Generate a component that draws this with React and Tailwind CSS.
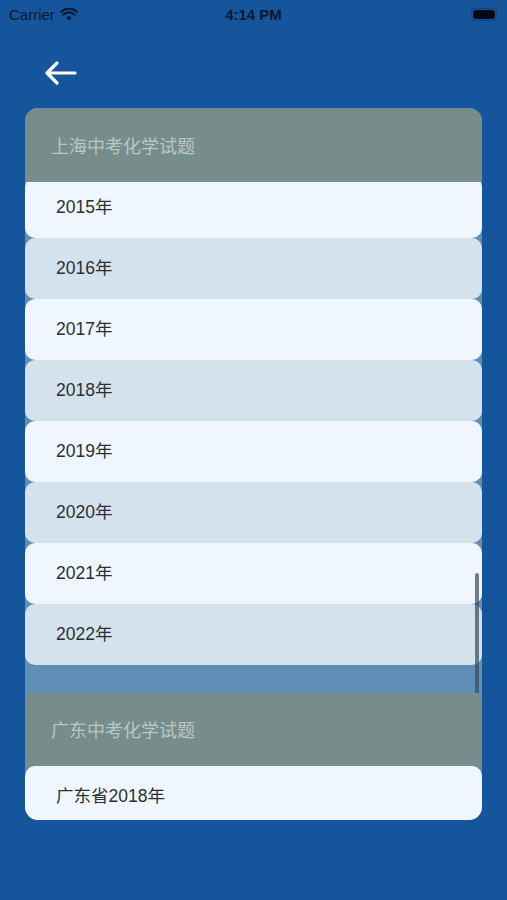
import React from "react";

const years = ["2015年", "2016年", "2017年", "2018年", "2019年", "2020年", "2021年", "2022年"];

function StatusBar() {
  return (
    <div className="relative h-[28px] flex items-center px-[9px] text-[#0b1830]">
      <div className="flex items-center gap-[5px]">
        <span className="text-[15px] font-medium leading-none">Carrier</span>
        <svg width="18" height="13" viewBox="0 0 18 13">
          <path d="M9 12.5 L6.3 9.4 A4 4 0 0 1 11.7 9.4 Z" fill="#0b1830" />
          <path d="M3.6 6.6 A7.6 7.6 0 0 1 14.4 6.6" stroke="#0b1830" strokeWidth="2.2" fill="none" strokeLinecap="round" />
          <path d="M1.2 3.8 A11 11 0 0 1 16.8 3.8" stroke="#0b1830" strokeWidth="2.2" fill="none" strokeLinecap="round" />
        </svg>
      </div>
      <span className="absolute left-1/2 -translate-x-1/2 text-[15px] font-semibold leading-none">4:14 PM</span>
      <div className="ml-auto mr-[1px] w-[26px] h-[13px] rounded-[4px] border border-[#0b1830]/30 p-[1px]">
        <div className="w-full h-full rounded-[3px] bg-[#050a14]" />
      </div>
    </div>
  );
}

function Row({ label, light }) {
  return (
    <div
      className={`h-[61px] shrink-0 rounded-[10px] flex items-center pl-[31px] text-[17.5px] text-[#2b2f33] ${
        light ? "bg-[#f0f6fe]" : "bg-[#d4e2ed]"
      }`}
    >
      {label}
    </div>
  );
}

function SectionHeader({ title, h }) {
  return (
    <div className={`${h} shrink-0 relative z-10 bg-[#778d8b] flex items-center pl-[26px] pt-[4px] text-[18px] text-[#b9c7c5]`}>
      {title}
    </div>
  );
}

export default function App() {
  return (
    <div
      className="w-[507px] h-[900px] bg-[#15559b] overflow-hidden"
      style={{ fontFamily: '"Liberation Sans", "Noto Sans CJK SC", sans-serif' }}
    >
      <StatusBar />
      <div className="h-[80px] flex items-center pl-[44px]">
        <svg width="33" height="26" viewBox="0 0 33 26" className="mt-[10px]">
          <path d="M31 13 H4 M13 3 L3 13 L13 23" stroke="white" strokeWidth="3.2" fill="none" strokeLinecap="round" strokeLinejoin="round" />
        </svg>
      </div>
      <div className="mx-[25px] h-[712px] rounded-[13px] overflow-hidden bg-[#5f8fb6] relative flex flex-col">
        <SectionHeader title="上海中考化学试题" h="h-[74px]" />
        <div className="-mt-[5px] flex flex-col">
          {years.map((y, i) => (
            <Row key={y} label={y} light={i % 2 === 0} />
          ))}
        </div>
        <div className="h-[28px] shrink-0" />
        <SectionHeader title="广东中考化学试题" h="h-[73px]" />
        <Row label="广东省2018年" light />
        <div className="absolute left-[450px] top-[465px] w-[4px] h-[127px] rounded-full bg-[#3c4a58]/70" />
      </div>
    </div>
  );
}
